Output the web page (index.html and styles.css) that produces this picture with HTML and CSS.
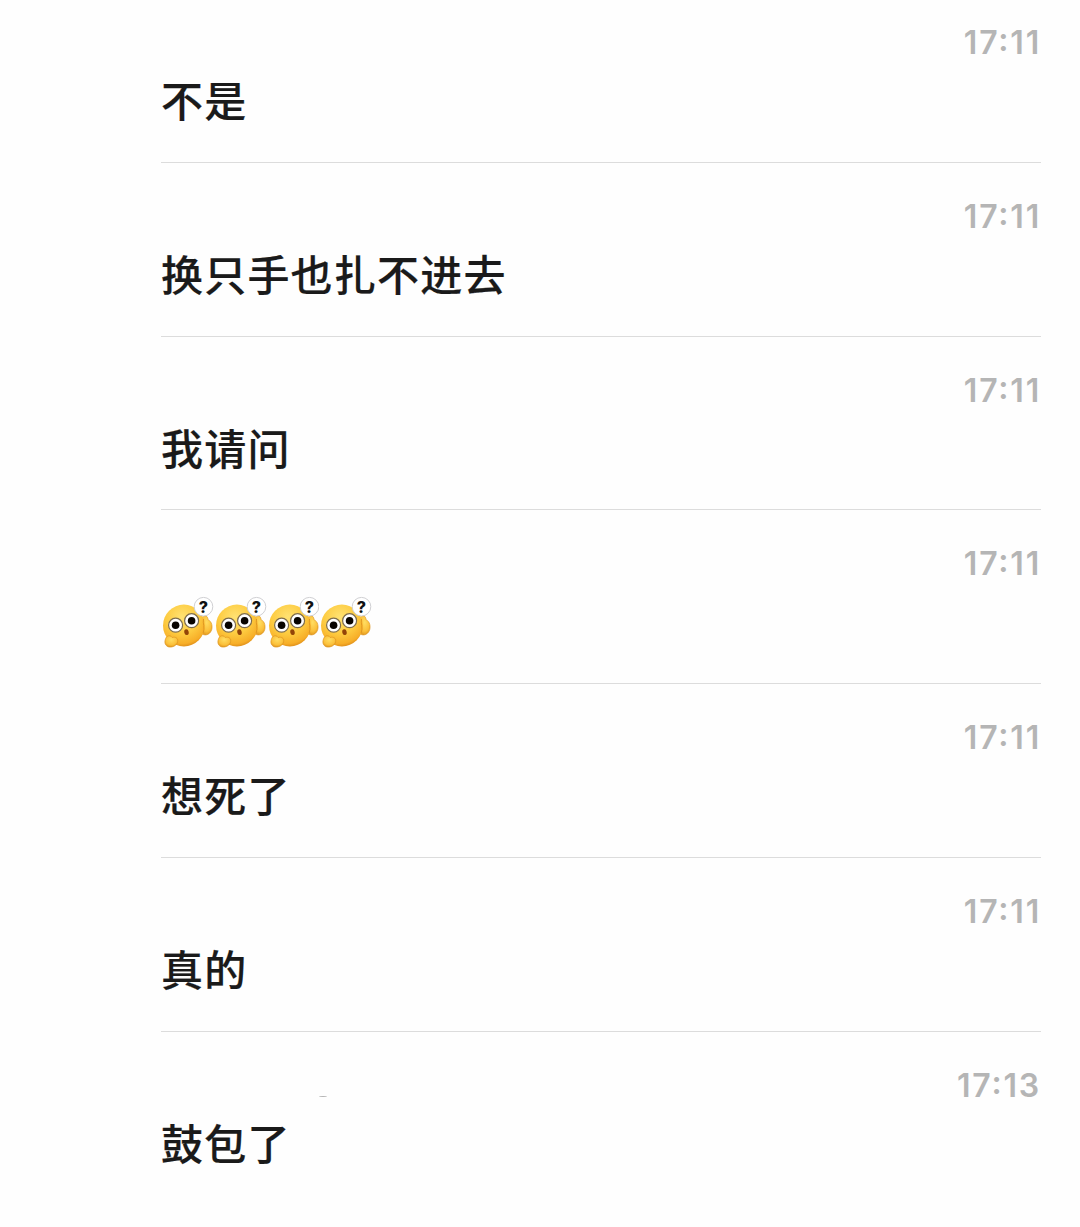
FILE: index.html
```html
<!DOCTYPE html>
<html lang="zh-CN">
<head>
    <meta charset="UTF-8">
    <meta name="viewport" content="width=device-width, initial-scale=1.0">
    <title>聊天记录</title>
    <link rel="stylesheet" href="styles.css">
</head>
<body>
    <main class="messages">
        <article class="message">
            <time class="time">17:11</time>
            <p class="text">不是</p>
        </article>
        <article class="message">
            <time class="time">17:11</time>
            <p class="text">换只手也扎不进去</p>
        </article>
        <article class="message">
            <time class="time">17:11</time>
            <p class="text">我请问</p>
        </article>
        <article class="message">
            <time class="time">17:11</time>
            <div class="emojis">
                <svg class="emoji" viewBox="0.8 0 52.8 56">
                    <defs>
                        <radialGradient id="face" cx="45%" cy="30%" r="72%">
                            <stop offset="0" stop-color="#ffe273"/>
                            <stop offset="0.55" stop-color="#fdcb40"/>
                            <stop offset="0.88" stop-color="#f7ae28"/>
                            <stop offset="1" stop-color="#dc8b17"/>
                        </radialGradient>
                        <radialGradient id="hand" cx="50%" cy="35%" r="65%">
                            <stop offset="0" stop-color="#ffdd62"/>
                            <stop offset="0.7" stop-color="#fbc03a"/>
                            <stop offset="1" stop-color="#e39a20"/>
                        </radialGradient>
                    </defs>
                    <g id="confused">
                        <path d="M42 24 C42 20 47.500 19 48 25 C51.500 26 53 32 51 36 C49 40 44 41.500 41 38 Z" fill="url(#hand)" stroke="#dc9420" stroke-width="0.600"/>
                        <circle cx="23.700" cy="30.500" r="20.900" fill="url(#face)"/>
                        <path d="M43.300 24 C42.300 28 45 33 43 38" fill="none" stroke="#dc9420" stroke-width="0.900"/>
                        <path d="M7 41.500 C9 40 11 41 12 42.500 C15 41.500 18 43 17.500 46.500 C17 50 13 52.500 9 52 C5.500 51.500 4 48 5 45 C5.500 43 6 42.200 7 41.500 Z" fill="url(#hand)" stroke="#dc9420" stroke-width="0.700"/>
                        <circle cx="15.400" cy="30.200" r="7" fill="#fff" stroke="#7d6c4c" stroke-width="1.200"/>
                        <circle cx="15.400" cy="30.200" r="3.800" fill="#080400"/>
                        <circle cx="31.400" cy="25.700" r="7" fill="#fff" stroke="#7d6c4c" stroke-width="1.200"/>
                        <circle cx="31.400" cy="25.700" r="3.800" fill="#080400"/>
                        <ellipse cx="26.300" cy="37.200" rx="2.200" ry="2.900" transform="rotate(-12 26.300 37.200)" fill="#934408"/>
                        <circle cx="43.300" cy="11.700" r="9.300" fill="#fff" stroke="#cfcfd2" stroke-width="1"/>
                        <text class="mark" x="43.300" y="17.700">?</text>
                    </g>
                </svg>
                <svg class="emoji" viewBox="0.8 0 52.8 56"><use href="#confused"/></svg>
                <svg class="emoji" viewBox="0.8 0 52.8 56"><use href="#confused"/></svg>
                <svg class="emoji" viewBox="0.8 0 52.8 56"><use href="#confused"/></svg>
            </div>
        </article>
        <article class="message">
            <time class="time">17:11</time>
            <p class="text">想死了</p>
        </article>
        <article class="message">
            <time class="time">17:11</time>
            <p class="text">真的</p>
        </article>
        <article class="message">
            <time class="time">17:13</time>
            <p class="text">鼓包了</p>
            <span class="speck"></span>
        </article>
    </main>
</body>
</html>
```

FILE: styles.css
```css
* {
    box-sizing: border-box;
}
body {
    margin: 0;
    background-color: #fefefe;
    font-family: Inter, "Noto Sans CJK SC", sans-serif;
}
.messages {
    height: 1227px;
    padding: 0 39px 0 161px;
    overflow: hidden;
}
.message {
    position: relative;
    display: flex;
    flex-direction: column;
    height: 173.8px;
    padding-top: 34px;
    border-bottom: 1px solid #dcdcdc;
}
.message:first-child {
    height: 162.8px;
    padding-top: 23px;
}
.message:last-child {
    border-bottom: none;
}
.time {
    align-self: flex-end;
    height: 40px;
    line-height: 40px;
    font-size: 32px;
    font-weight: 600;
    letter-spacing: 1.8px;
    font-feature-settings: "calt", "case";
    color: #b5b5b5;
}
.text {
    margin: 6px 0 0;
    height: 60px;
    line-height: 60px;
    font-family: "Noto Sans CJK SC", sans-serif;
    font-size: 42px;
    font-weight: 500;
    letter-spacing: 1.2px;
    color: #1a1a1a;
    -webkit-text-stroke: 0.2px #1a1a1a;
}
.emojis {
    display: flex;
    margin-top: 11px;
}
.emoji {
    display: block;
    width: 52.8px;
    height: 56px;
}
.mark {
    font-family: Inter, sans-serif;
    font-size: 16px;
    font-weight: 800;
    text-anchor: middle;
    fill: #111;
}
.speck {
    position: absolute;
    left: 158px;
    top: 64px;
    width: 8px;
    height: 1px;
    border-radius: 50%;
    background-color: #b5b5b5;
}
```
